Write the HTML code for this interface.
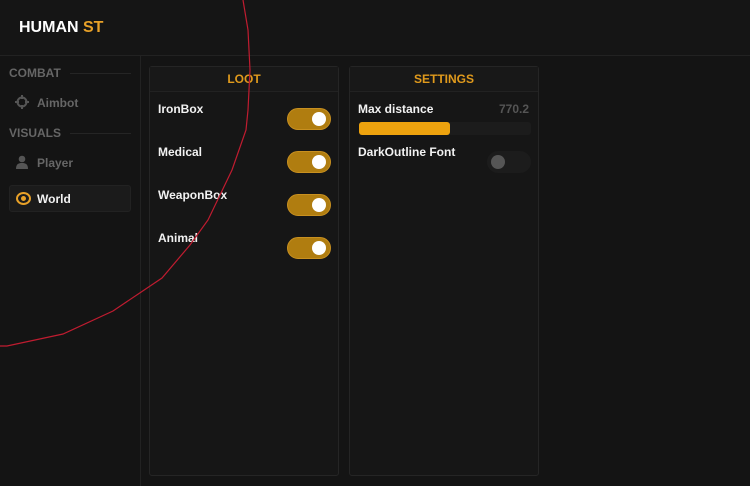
<!DOCTYPE html><html><head><style>
*{margin:0;padding:0;box-sizing:border-box}
body{width:750px;height:486px;background:#141414;font-family:"Liberation Sans",sans-serif;position:relative;overflow:hidden;color:#eee}
.hdr{position:absolute;left:0;top:0;width:750px;height:56px;background:#151515;border-bottom:1px solid #222}
.hdr span{position:absolute;left:19px;top:19px;font-size:16px;font-weight:bold;color:#fff}
.side{position:absolute;left:0;top:56px;width:141px;height:430px;border-right:1px solid #222;background:#141414}
.sec{position:absolute;left:9px;font-size:12px;font-weight:bold;color:#666}
.ln{position:absolute;height:1px;background:#252525;left:70px;width:61px}
.item{position:absolute;left:37px;font-size:12px;font-weight:bold;color:#666}
.panel{position:absolute;top:66px;width:190px;height:410px;background:#161616;border:1px solid #252525;border-radius:3px}
.ph{height:25px;border-bottom:1px solid #222;text-align:center;font-size:12px;font-weight:bold;color:#e09a1c;line-height:25px;background:#181818}
.lbl{position:absolute;left:8px;font-size:12px;font-weight:bold;color:#f2f2f2}
.tg{position:absolute;left:137px;width:44px;height:22px;border-radius:11px;background:#b07d10;border:1px solid #c89020}
.tg:after{content:"";position:absolute;right:4px;top:3px;width:14px;height:14px;border-radius:50%;background:#fff}
</style></head><body>
<div class="hdr"><span>HUMAN <b style="color:#e8a128">ST</b></span></div>
<div class="side">
<div class="sec" style="top:10px">COMBAT</div><div class="ln" style="top:17px"></div>
<svg style="position:absolute;left:15px;top:39px" width="14" height="14" viewBox="0 0 14 14"><circle cx="7" cy="7" r="4.5" fill="none" stroke="#555" stroke-width="2"/><path d="M7 0v4M7 10v4M0 7h4M10 7h4" stroke="#555" stroke-width="2"/></svg>
<div class="item" style="top:40px">Aimbot</div>
<div class="sec" style="top:70px">VISUALS</div><div class="ln" style="top:77px"></div>
<svg style="position:absolute;left:15px;top:99px" width="14" height="14" viewBox="0 0 14 14"><circle cx="7" cy="4" r="3.3" fill="#555"/><path d="M1 14c0-5 2.5-6 6-6s6 1 6 6z" fill="#555"/></svg>
<div class="item" style="top:100px">Player</div>
<div style="position:absolute;left:9px;top:129px;width:122px;height:27px;background:#1b1b1b;border:1px solid #222;border-radius:3px"></div>
<svg style="position:absolute;left:16px;top:136px" width="15" height="13" viewBox="0 0 15 13"><ellipse cx="7.5" cy="6.5" rx="6.5" ry="5.5" fill="none" stroke="#e8a128" stroke-width="2"/><circle cx="7.5" cy="6.5" r="2.5" fill="#e8a128"/></svg>
<div class="item" style="top:136px;color:#f2f2f2">World</div>
</div>
<div class="panel" style="left:149px"><div class="ph">LOOT</div>
<div class="lbl" style="top:35px">IronBox</div><div class="tg" style="top:41px"></div>
<div class="lbl" style="top:78px">Medical</div><div class="tg" style="top:84px"></div>
<div class="lbl" style="top:121px">WeaponBox</div><div class="tg" style="top:127px"></div>
<div class="lbl" style="top:164px">Animal</div><div class="tg" style="top:170px"></div>
</div>
<div class="panel" style="left:349px"><div class="ph">SETTINGS</div>
<div class="lbl" style="top:35px">Max distance</div>
<div style="position:absolute;right:9px;top:35px;font-size:12px;font-weight:bold;color:#555">770.2</div>
<div style="position:absolute;left:9px;top:55px;width:172px;height:13px;background:#1c1c1c;border-radius:3px"><div style="width:91px;height:13px;background:#eda20e;border-radius:3px"></div></div>
<div class="lbl" style="top:78px">DarkOutline Font</div>
<div style="position:absolute;left:137px;top:84px;width:44px;height:22px;border-radius:11px;background:#1c1c1c"><div style="position:absolute;left:4px;top:4px;width:14px;height:14px;border-radius:50%;background:#555"></div></div>
</div>
<svg style="position:absolute;left:0;top:0" width="750" height="486"><polyline points="243,0 248,30 250,70 248,110 246,130 232,170 208,220 190,245 162,278 113,311 63,334 7,346 0,346" fill="none" stroke="#c01c30" stroke-width="1.2"/></svg>
</body></html>
